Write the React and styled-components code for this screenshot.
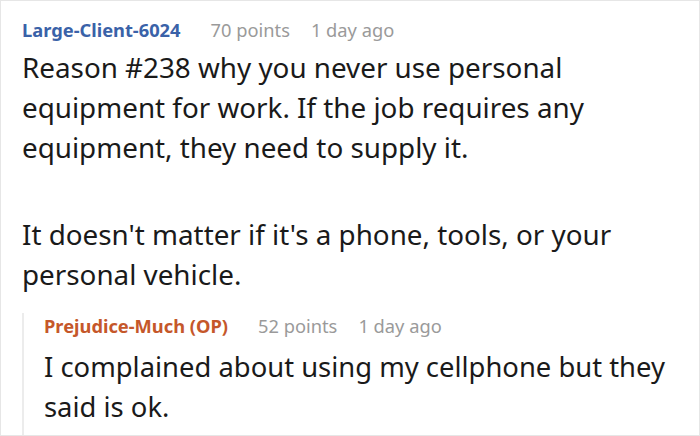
import styled, { createGlobalStyle } from "styled-components";

const GlobalStyle = createGlobalStyle`
	html, body {
		margin: 0;
		padding: 0;
		background: #ffffff;
	}
	body {
		font-family: "Noto Sans", "Open Sans", sans-serif;
	}
`;

const thread = {
	author: "Large-Client-6024",
	points: "70 points",
	time: "1 day ago",
	paragraphs: [
		"Reason #238 why you never use personal equipment for work. If the job requires any equipment, they need to supply it.",
		"It doesn't matter if it's a phone, tools, or your personal vehicle.",
	],
	reply: {
		author: "Prejudice-Much (OP)",
		points: "52 points",
		time: "1 day ago",
		paragraphs: ["I complained about using my cellphone but they said is ok."],
	},
};

const Comment = ({ data, isOp, nested }) => (
	<>
		<Header $nested={nested}>
			<Author $op={isOp}>{data.author}</Author>
			<Meta>{data.points}</Meta>
			<Meta>{data.time}</Meta>
		</Header>
		<Body $nested={nested}>
			{data.paragraphs.map((p) => (
				<Paragraph key={p}>{p}</Paragraph>
			))}
		</Body>
	</>
);

const App = () => {
	return (
		<>
			<GlobalStyle />
			<Card>
				<Comment data={thread} />
				<Reply>
					<Comment data={thread.reply} isOp nested />
				</Reply>
			</Card>
		</>
	);
};

export default App;

const Card = styled.div`
	box-sizing: border-box;
	width: 700px;
	height: 436px;
	padding: 16px 10px 0 21px;
	border: 1px solid #e6e6e6;
	overflow: hidden;
`;

const Header = styled.div`
	display: flex;
	align-items: baseline;
	gap: 21px;
	height: 26px;
	line-height: 26px;
	margin-bottom: ${(p) => (p.$nested ? "8px" : "4px")};
`;

const Author = styled.span`
	font-size: 18.3px;
	font-weight: 700;
	margin-right: 9px;
	color: ${(p) => (p.$op ? "#c5572a" : "#3a62a8")};
`;

const Meta = styled.span`
	font-size: 18.3px;
	color: #9a9a9a;
`;

const Body = styled.div`
	font-size: ${(p) => (p.$nested ? "27.4px" : "27.8px")};
	line-height: 40px;
	color: #1a1a1a;
`;

const Paragraph = styled.p`
	margin: 0 0 47px;

	&:last-child {
		margin-bottom: 0;
	}
`;

const Reply = styled.div`
	margin-top: 19px;
	border-left: 2px solid #ececec;
	padding-left: 20px;
	height: 200px;
`;
